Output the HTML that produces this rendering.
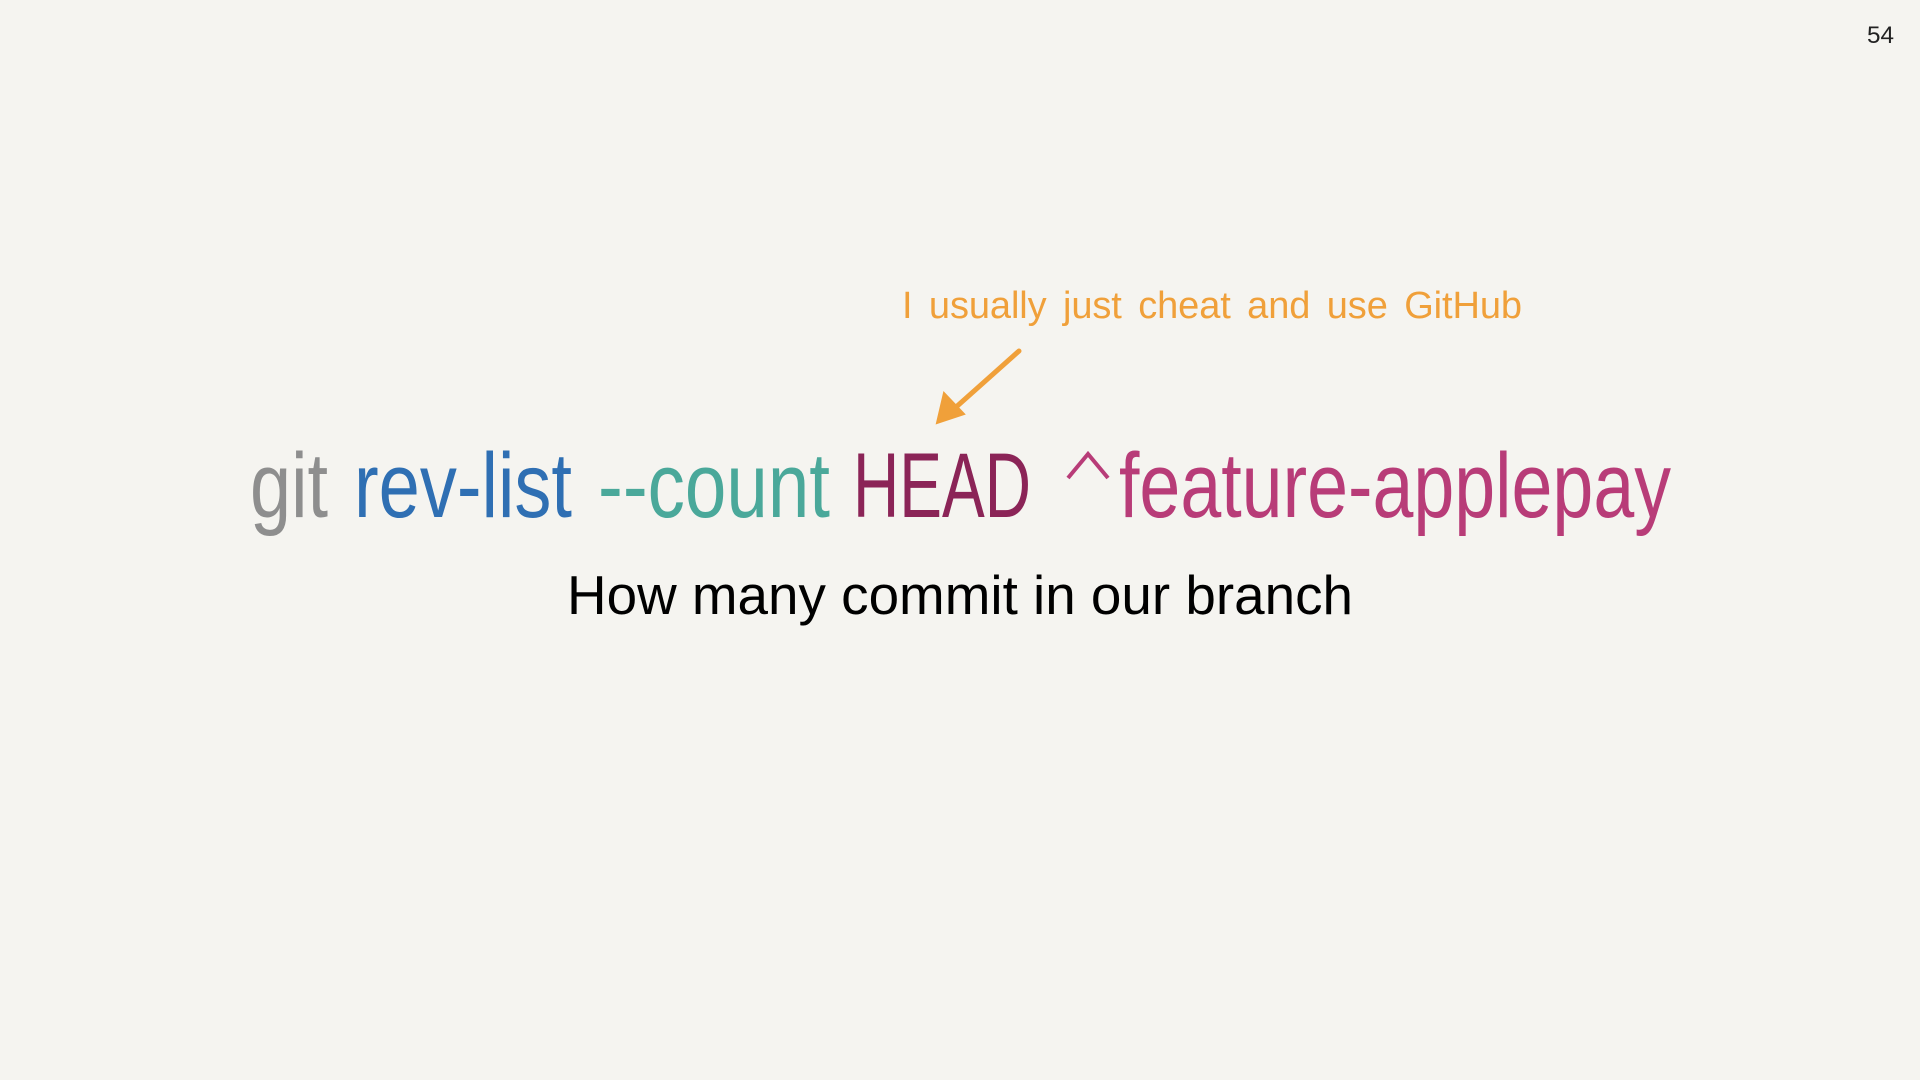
<!DOCTYPE html>
<html><head><meta charset="utf-8"><style>
html,body{margin:0;padding:0;background:#f5f4f0;width:1920px;height:1080px;overflow:hidden}
</style></head><body>
<svg width="1920" height="1080" viewBox="0 0 1920 1080" xmlns="http://www.w3.org/2000/svg" style="display:block">
<rect width="1920" height="1080" fill="#f5f4f0"/>
<text x="1867" y="43" font-family="Liberation Sans, sans-serif" font-size="24" fill="#222" textLength="27" lengthAdjust="spacingAndGlyphs">54</text>
<text x="902" y="318" font-family="Liberation Sans, sans-serif" font-size="38" fill="#f0a03a" textLength="620" lengthAdjust="spacing" word-spacing="6">I usually just cheat and use GitHub</text>
<g stroke="#f0a03a" fill="#f0a03a" stroke-linecap="round">
<path d="M1019 351 L955 408" stroke-width="5" fill="none"/>
<path d="M1015 356 L952 412" stroke-width="2" fill="none"/>
<path d="M937 423 L944 393 L964 414 Z" stroke-width="2"/>
</g>
<g font-family="Liberation Sans, sans-serif" font-size="92">
<text x="250" y="517" fill="#8e8e8e" textLength="78" lengthAdjust="spacingAndGlyphs">git</text>
<text x="354" y="517" fill="#2f6fb3" textLength="218" lengthAdjust="spacingAndGlyphs">rev-list</text>
<text x="598" y="517" fill="#4aa89a" textLength="232" lengthAdjust="spacingAndGlyphs">--count</text>
<text x="853" y="517" fill="#8b2457" textLength="178" lengthAdjust="spacingAndGlyphs">HEAD</text>
<path d="M1068 478 L1088 454 L1108 478" stroke="#b83c78" stroke-width="4" fill="none"/>
<text x="1119" y="517" fill="#b83c78" textLength="552" lengthAdjust="spacingAndGlyphs">feature-applepay</text>
</g>
<text x="567" y="614" font-family="Liberation Sans, sans-serif" font-size="55" fill="#000" textLength="786" lengthAdjust="spacingAndGlyphs">How many commit in our branch</text>
</svg>
</body></html>
